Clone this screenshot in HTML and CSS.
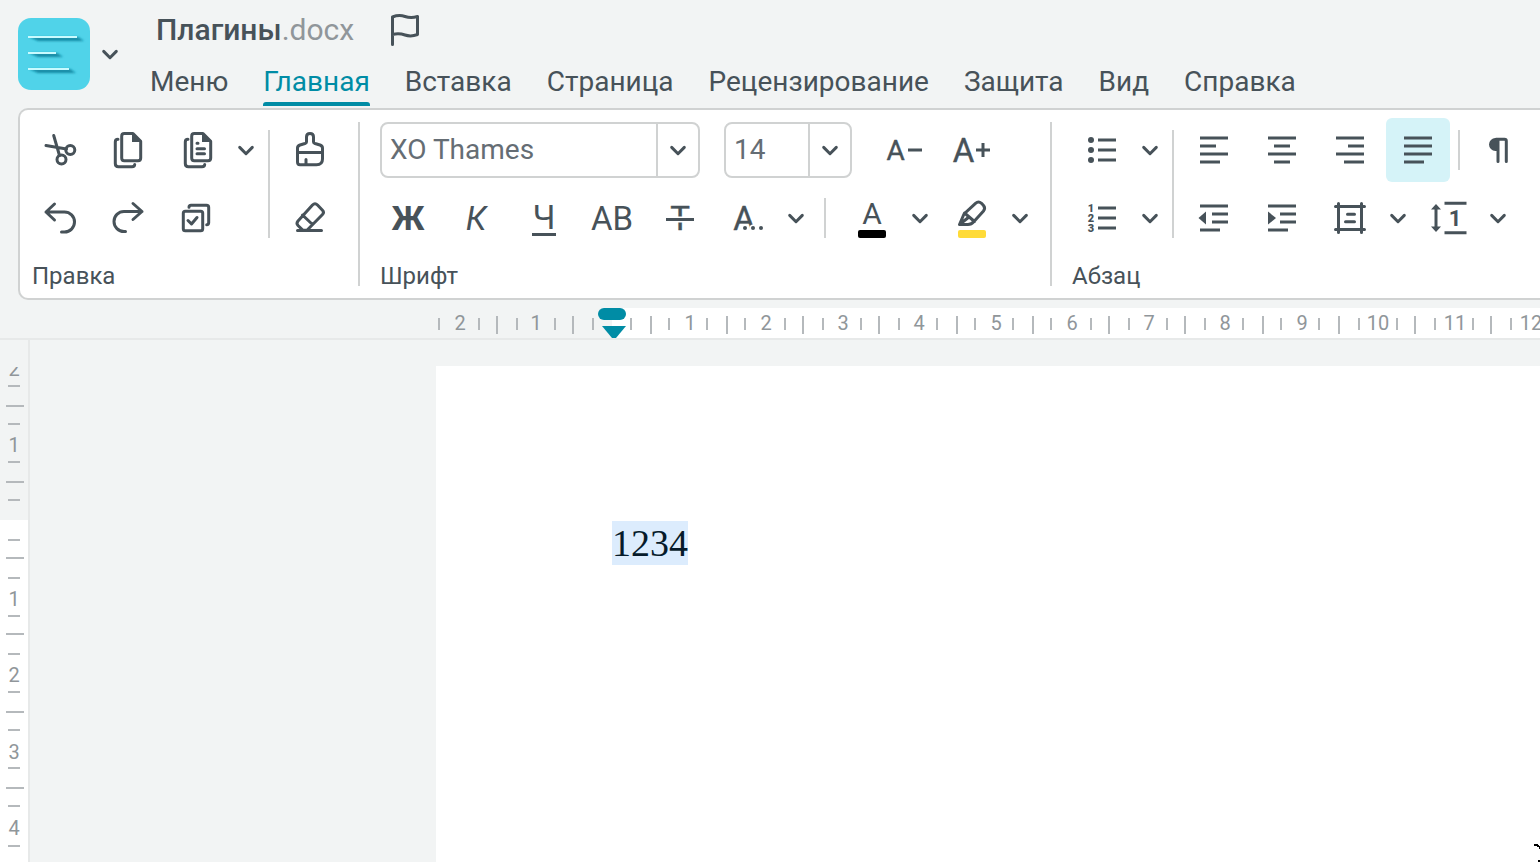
FILE: index.html
```html
<!DOCTYPE html>
<html lang="ru">
<head>
<meta charset="utf-8">
<title>Плагины.docx</title>
<link rel="stylesheet" href="styles.css">
</head>
<body>
<svg class="defs" aria-hidden="true">
  <symbol id="chevron" viewBox="-10 -10 20 20"><path d="M-6.3-2.6 0 3.7 6.3-2.6"/></symbol>
  <symbol id="pages" viewBox="-20 -20 40 40">
    <path d="M-3.7-16.4H5L12.7-8.6V8Q12.7 10.7 10 10.7H-3.7Q-6.3 10.7-6.3 8V-13.7Q-6.3-16.4-3.7-16.4Z"/>
    <path class="solid" d="M4-17V-8H13.5V-9L5.500-17Z"/>
    <path d="M-10-10.7Q-12.7-10.700-12.700-8V13.500Q-12.700 16.700-9.500 16.700H4Q6.700 16.700 6.700 14.500"/>
  </symbol>
</svg>

<header class="header">
  <button class="logo" aria-label="Приложение">
    <svg viewBox="0 0 72 72" width="72" height="72">
      <defs><filter id="soft" x="-20%" y="-60%" width="140%" height="240%"><feGaussianBlur stdDeviation="1.3"/></filter></defs>
      <rect width="72" height="72" rx="13" fill="#50d3e9"/>
      <g fill="#128ba5" filter="url(#soft)"><path d="M11 19H60L66 23H20Z"/><path d="M11 35H39L45 39H20Z"/><path d="M11 51H52L58 55H20Z"/></g>
      <g fill="#c9fbff"><path d="M10 18H59V20H10ZM10 34H38V36H10ZM10 50H51V52H10Z"/></g>
    </svg>
  </button>
  <button class="arrow logo-arrow" aria-label="Выбрать приложение"><svg class="chev"><use href="#chevron"/></svg></button>
  <div class="head-main">
    <div class="title"><h1>Плагины<span>.docx</span></h1>
      <button class="flag" aria-label="Отметить"><svg width="32" height="36" viewBox="0 0 32 36"><path d="M4.500 32.500V5Q11 2.500 17 4.500Q23 6.500 29.500 4.500V22.500Q23 25 17 23Q11 21 4.500 22.500"/></svg></button>
    </div>
    <nav class="tabs">
      <a href="#menu">Меню</a><a href="#home" class="active" aria-current="page">Главная</a><a href="#insert">Вставка</a><a href="#page">Страница</a><a href="#review">Рецензирование</a><a href="#protect">Защита</a><a href="#view">Вид</a><a href="#help">Справка</a>
    </nav>
  </div>
</header>

<section class="toolbar" aria-label="Главная">
  <div class="group">
    <div class="tools">
      <div class="rows">
        <div class="row">
          <button class="tool" aria-label="Вырезать"><svg class="icon" viewBox="-20 -20 40 40"><path d="M-14-4.500 6.500-1M-6.300-14.500-.500 5.500"/><circle cx="10.300" cy="0" r="4.500"/><circle cx="1.500" cy="9.500" r="4.500"/></svg></button>
          <button class="tool" aria-label="Копировать"><svg class="icon"><use href="#pages"/></svg></button>
          <div class="split">
            <button class="tool" aria-label="Вставить"><svg class="icon" viewBox="-22 -20 40 40"><use href="#pages" x="-20" y="-20" width="40" height="40"/><path d="M-1-6.700H0M-1-1.300H6.500M-1 3.700H6.500"/></svg></button>
            <button class="arrow wide" aria-label="Параметры вставки"><svg class="chev"><use href="#chevron"/></svg></button>
          </div>
        </div>
        <div class="row">
          <button class="tool" aria-label="Отменить"><svg class="icon" viewBox="-20 -20 40 40"><path d="M-5.500-14-14-6-5.500 2M-14-6H4.500A10 10 0 0 1 4.500 14H1.500"/></svg></button>
          <button class="tool" aria-label="Повторить"><svg class="icon" viewBox="-20 -20 40 40"><path d="M5-14.500 14-6.500 5 1.500M14-6.500H-4A10 10 0 0 0-4 13.500H-2.500"/></svg></button>
          <button class="tool" aria-label="Выделить всё"><svg class="icon" viewBox="-20 -20 40 40"><rect x="-12.700" y="-6.700" width="19.400" height="19.400" rx="2"/><path d="M-7-10.700Q-7-12.700-5-12.700H10.500Q12.700-12.700 12.700-10.500V4.500Q12.700 6.700 10.700 6.700M-8 2.500-4.500 6 1-.500"/></svg></button>
        </div>
      </div>
      <i class="sep gap-sm"></i>
      <div class="rows">
        <button class="tool" aria-label="Формат по образцу"><svg class="icon" viewBox="-20 -20 40 40"><path d="M-3.500-13Q-3.500-16.500 0-16.500T3.500-13V-8Q3.500-7 5-6.500L10-5Q12.500-4 12.500-2V9Q12.500 14.700 6.500 14.700H-10Q-12.500 14.700-12.500 12V-2Q-12.500-4-10-5L-5-6.500Q-3.500-7-3.500-8ZM-12.500 2.500H12.500M-4 9.500V14"/></svg></button>
        <button class="tool" aria-label="Очистить формат"><svg class="icon" viewBox="-20 -20 40 40"><path d="M2.500-13Q5-15.500 7.500-13L12.500-7.700Q14.500-5.500 12.500-3.500L-3 12.300H-7L-12 7.500Q-14 5.500-12 3ZM-7.500-3 2.500 6.500M-12.500 12.400H11.500"/></svg></button>
      </div>
    </div>
    <h2>Правка</h2>
  </div>
  <i class="divider"></i>
  <div class="group group-font">
    <div class="rows">
      <div class="row">
        <div class="field field-font"><input type="text" value="XO Thames" aria-label="Шрифт"><button aria-label="Список шрифтов"><svg class="chev"><use href="#chevron"/></svg></button></div>
        <div class="field field-size"><input type="text" value="14" aria-label="Размер шрифта"><button aria-label="Список размеров"><svg class="chev"><use href="#chevron"/></svg></button></div>
        <div class="row">
          <button class="tool" aria-label="Уменьшить шрифт"><svg class="icon" viewBox="-20 -20 40 40"><text class="t28 plain firm" x="-8.500" y="10">A</text><path class="flat" d="M4 0H18"/></svg></button>
          <button class="tool" aria-label="Увеличить шрифт"><svg class="icon" viewBox="-20 -20 40 40"><text class="t32 plain firm" x="-8.500" y="12">A</text><path class="flat" d="M4 0H18M11-7V7"/></svg></button>
        </div>
      </div>
      <div class="row nudge">
        <button class="tool" aria-label="Полужирный"><svg class="icon" viewBox="-20 -20 40 40"><text class="t32 heavy" x="0" y="12">Ж</text></svg></button>
        <button class="tool" aria-label="Курсив"><svg class="icon" viewBox="-20 -20 40 40"><text class="t32 italic" x="0" y="12">К</text></svg></button>
        <button class="tool" aria-label="Подчёркнутый"><svg class="icon" viewBox="-20 -20 40 40"><text class="t32 plain" x="0" y="11">Ч</text><path class="flat" d="M-12 16.500H12"/></svg></button>
        <button class="tool" aria-label="Все прописные"><svg class="icon" viewBox="-20 -20 40 40"><text class="t32 plain" x="0" y="12">AB</text></svg></button>
        <button class="tool" aria-label="Зачёркнутый"><svg class="icon" viewBox="-20 -20 40 40"><text class="t32 plain firm" x="0" y="12">T</text><path class="halo" d="M-12 1.500H12"/><path class="flat" d="M-14 1.500H14"/></svg></button>
        <div class="split">
          <button class="tool" aria-label="Другие эффекты"><svg class="icon" viewBox="-20 -20 40 40"><text class="t32 plain firm" x="-4" y="12">A</text><g class="halo-dots"><circle cx="-3" cy="10" r="2"/><circle cx="5" cy="10" r="2"/><circle cx="13" cy="10" r="2"/></g></svg></button>
          <button class="arrow" aria-label="Список эффектов"><svg class="chev"><use href="#chevron"/></svg></button>
        </div>
        <i class="sep short gap-font"></i>
        <div class="split">
          <button class="tool" aria-label="Цвет текста"><svg class="icon" viewBox="-20 -20 40 40"><text class="t30 plain" x="0" y="6">A</text><rect class="black" x="-14" y="12" width="28" height="8" rx="2"/></svg></button>
          <button class="arrow" aria-label="Выбор цвета текста"><svg class="chev"><use href="#chevron"/></svg></button>
        </div>
        <div class="split">
          <button class="tool" aria-label="Цвет выделения"><svg class="icon" viewBox="-20 -20 40 40"><path d="M-12.500 6.500-8-4 3.500-14.700Q6.500-17.300 9.500-14.700L11.500-12.500Q13.700-9.700 11.500-7L2 3.500Q-.500 6.500-4 6.500ZM-7.500-5 2.500 3.500M-12.500 6.500-3-1"/><rect class="yellow" x="-14" y="12" width="28" height="8" rx="2"/></svg></button>
          <button class="arrow" aria-label="Выбор цвета выделения"><svg class="chev"><use href="#chevron"/></svg></button>
        </div>
      </div>
    </div>
    <h2>Шрифт</h2>
  </div>
  <i class="divider"></i>
  <div class="group group-para">
    <div class="tools">
      <div class="rows">
        <div class="split">
          <button class="tool" aria-label="Маркированный список"><svg class="icon" viewBox="-20 -20 40 40"><g class="dots"><circle cx="-11" cy="-10" r="3"/><circle cx="-11" cy="0" r="3"/><circle cx="-11" cy="10" r="3"/></g><path class="flat" d="M-4-10H14M-4 0H14M-4 10H14"/></svg></button>
          <button class="arrow" aria-label="Стили маркеров"><svg class="chev"><use href="#chevron"/></svg></button>
        </div>
        <div class="split">
          <button class="tool" aria-label="Нумерованный список"><svg class="icon" viewBox="-20 -20 40 40"><text class="t11" x="-11" y="-6">1</text><text class="t11" x="-11" y="4">2</text><text class="t11" x="-11" y="14">3</text><path class="flat" d="M-4-10H14M-4 0H14M-4 10H14"/></svg></button>
          <button class="arrow" aria-label="Стили нумерации"><svg class="chev"><use href="#chevron"/></svg></button>
        </div>
      </div>
      <i class="sep gap-para"></i>
      <div class="rows">
        <div class="row">
          <button class="tool" aria-label="По левому краю"><svg class="icon" viewBox="-20 -20 40 40"><path class="flat" d="M-14-12H14M-14-4H2M-14 4H14M-14 12H6"/></svg></button>
          <button class="tool" aria-label="По центру"><svg class="icon" viewBox="-20 -20 40 40"><path class="flat" d="M-14-12H14M-8-4H8M-14 4H14M-8 12H8"/></svg></button>
          <button class="tool" aria-label="По правому краю"><svg class="icon" viewBox="-20 -20 40 40"><path class="flat" d="M-14-12H14M-2-4H14M-14 4H14M-6 12H14"/></svg></button>
          <button class="tool pressed" aria-pressed="true" aria-label="По ширине"><svg class="icon" viewBox="-20 -20 40 40"><path class="flat" d="M-14-12H14M-14-4H14M-14 4H14M-14 12H6"/></svg></button>
          <i class="sep short gap-mark"></i>
          <button class="tool narrow" aria-label="Непечатаемые символы"><svg class="icon" viewBox="-20 -20 40 40"><path class="solid" d="M0-12H-2.500A6.500 6.500 0 0 0-2.500 1H0Z"/><path d="M-2-10.700H6.500Q8.300-10.700 8.300-9V11.500M0-10V11.500"/></svg></button>
        </div>
        <div class="row">
          <button class="tool" aria-label="Уменьшить отступ"><svg class="icon" viewBox="-20 -20 40 40"><path class="flat" d="M-14-12H14M-2-4H14M-2 4H14M-14 12H6"/><path class="fill" d="M-15.500 0-8-6.500V6.500Z"/></svg></button>
          <button class="tool" aria-label="Увеличить отступ"><svg class="icon" viewBox="-20 -20 40 40"><path class="flat" d="M-14-12H14M-2-4H14M-2 4H14M-14 12H6"/><path class="fill" d="M-6 0-14-6.500V6.500Z"/></svg></button>
          <div class="split">
            <button class="tool" aria-label="Границы абзаца"><svg class="icon" viewBox="-20 -20 40 40"><path d="M-11.500-14.500V14.500M11.500-14.500V14.500M-14.500-11.500H14.500M-14.500 11.500H14.500M-2.500-3.700H4.500M-4.500 3.700H4.500"/></svg></button>
            <button class="arrow" aria-label="Параметры границ"><svg class="chev"><use href="#chevron"/></svg></button>
          </div>
          <div class="split">
            <button class="tool" aria-label="Межстрочный интервал"><svg class="icon" viewBox="-20 -20 40 40"><path class="flat" d="M-5.500-14.700H16.500M-5.500 14.700H16.500M-14-10V10"/><path class="fill" d="M-14-14-9-8.500H-19ZM-14 14-9 8.500H-19Z"/><text class="t22" x="5" y="8">1</text></svg></button>
            <button class="arrow" aria-label="Параметры интервала"><svg class="chev"><use href="#chevron"/></svg></button>
          </div>
        </div>
      </div>
    </div>
    <h2>Абзац</h2>
  </div>
</section>

<svg class="ruler-top" id="ruler-top" role="img" aria-label="Горизонтальная линейка">
  <rect class="ruler-area" x="612" y="0" width="100%" height="30"/>
  <g class="marks"></g>
  <g class="marker"><rect x="598" y="0" width="28" height="12" rx="6"/><path d="M602 18H626L616 30H612Z"/></g>
</svg>

<main class="workspace">
  <svg class="ruler-side" id="ruler-side" role="img" aria-label="Вертикальная линейка">
    <rect class="ruler-area" x="0" y="180" width="28" height="100%"/>
    <g class="marks"></g>
    <rect class="ruler-cap" x="0" y="0" width="28" height="27"/>
  </svg>
  <div class="canvas">
    <article class="sheet"><p><span>1234</span></p></article>
  </div>
</main>
<svg class="pointer" width="6" height="18" viewBox="0 0 6 18" aria-hidden="true"><path d="M0 0H4V1H5V2H6V5H5V3H3V2H0ZM4 16H6V18H4Z"/></svg>
<script src="rulers.js"></script>
</body>
</html>
```
FILE: rulers.js
```js
const NS = "http://www.w3.org/2000/svg";
const QUARTER = 19.13;

function drawRuler(id, origin, first, length, makeTick, placeLabel) {
  const marks = document.querySelector("#" + id + " .marks");
  marks.replaceChildren();
  let ticks = "";
  for (let n = first; origin + n * QUARTER < length; n++) {
    const at = origin + n * QUARTER;
    if (n % 4 !== 0) {
      ticks += makeTick(2 * Math.round(at / 2), n % 2 === 0);
    } else if (n !== 0) {
      const label = document.createElementNS(NS, "text");
      const [x, y] = placeLabel(Math.round(at));
      label.setAttribute("x", x);
      label.setAttribute("y", y);
      label.textContent = Math.abs(n / 4);
      marks.append(label);
    }
  }
  const path = document.createElementNS(NS, "path");
  path.setAttribute("d", ticks);
  marks.append(path);
}

function drawRulers() {
  const top = document.getElementById("ruler-top").getBoundingClientRect();
  const side = document.getElementById("ruler-side").getBoundingClientRect();
  drawRuler("ruler-top", 611, -9, top.width,
    (x, half) => half ? `M${x} 8h2v18h-2Z` : `M${x} 10h2v12h-2Z`,
    at => [at + 2, 22]);
  drawRuler("ruler-side", 180, -8, side.height,
    (y, half) => half ? `M6 ${y - 1}h18v2h-18Z` : `M8 ${y - 1}h12v2h-12Z`,
    at => [14, at + 9]);
}

drawRulers();
window.addEventListener("resize", drawRulers);
```
FILE: styles.css
```css
:root {
  --ink: #475259;
  --accent: #008ca5;
  --line: #d0d2d2;
  --back: #f2f4f4;
}

* { box-sizing: border-box; }

body {
  margin: 0;
  height: 100vh;
  display: flex;
  flex-direction: column;
  overflow: hidden;
  background: var(--back);
  color: var(--ink);
  font-family: Roboto, "Noto Sans", sans-serif;
}

button {
  padding: 0;
  border: 0;
  background: none;
  color: inherit;
  font: inherit;
  display: flex;
  align-items: center;
  justify-content: center;
  flex-shrink: 0;
}

svg { display: block; flex-shrink: 0; }
.defs { position: absolute; width: 0; height: 0; }

.header { display: flex; padding: 8px 0 2px 18px; }
.logo { align-self: flex-start; margin-top: 10px; }
.arrow { width: 32px; height: 64px; }
.arrow.wide { width: 36px; }
.logo-arrow { width: 40px; margin-top: 14px; }
.head-main { padding-left: 20px; }
.title { display: flex; align-items: center; gap: 34px; padding-left: 6px; height: 44px; }
.title h1 { margin: 0; font-size: 30px; line-height: 44px; font-weight: 500; }
.title h1 span { color: #90969a; font-weight: 400; }
.tabs { display: flex; gap: 35px; margin-top: 6px; }
.tabs a {
  color: inherit;
  text-decoration: none;
  white-space: nowrap;
  font-size: 28px;
  line-height: 48px;
  position: relative;
}
.tabs .active { color: var(--accent); }
.tabs .active::after {
  content: "";
  position: absolute;
  left: 0;
  right: 0;
  bottom: 0;
  height: 4px;
  border-radius: 3px 3px 0 0;
  background: var(--accent);
}

.chev { width: 20px; height: 20px; }
.icon { width: 40px; height: 40px; overflow: visible; }
.chev, .icon, .flag svg {
  fill: none;
  stroke: var(--ink);
  stroke-width: 3px;
  stroke-linecap: round;
  stroke-linejoin: round;
}
.icon .flat { stroke-linecap: butt; }
.icon .halo { stroke: #fff; stroke-width: 6px; }
.icon .fill, .icon .dots { fill: var(--ink); stroke: none; }
.icon .halo-dots { fill: var(--ink); stroke: #fff; stroke-width: 3px; paint-order: stroke; }
.solid { fill: var(--ink); stroke: none; }
.icon .black { fill: #000; stroke: none; }
.icon .yellow { fill: #ffdb38; stroke: none; }
.icon text { fill: var(--ink); stroke: none; text-anchor: middle; font-weight: 500; }
.icon .plain { font-weight: 400; }
.icon .firm { stroke: var(--ink); stroke-width: 0.4px; }
.icon .heavy { font-weight: 700; }
.icon .italic { font-weight: 400; font-style: italic; }
.icon .t11 { font-size: 11px; font-weight: 900; }
.icon .t22 { font-size: 22px; font-weight: 700; }
.icon .t28 { font-size: 28px; }
.icon .t30 { font-size: 30px; }
.icon .t32 { font-size: 33px; }

.toolbar {
  display: flex;
  margin-left: 18px;
  padding: 8px 0 8px 8px;
  border: 2px solid var(--line);
  border-right: 0;
  border-radius: 10px 0 0 10px;
  background: #fff;
  overflow: hidden;
}
.group { flex-shrink: 0; padding-right: 16px; }
.group h2 { margin: 12px 0 0 4px; font-size: 24px; line-height: 28px; font-weight: 400; }
.group-font { padding: 0 14px 0 20px; }
.group-font h2 { margin-left: 0; }
.group-para { padding-left: 18px; }
.group-para h2 { margin-left: 2px; }
.tools, .row, .split { display: flex; align-items: center; }
.rows { display: flex; flex-direction: column; gap: 4px; }
.row { gap: 4px; }
.nudge { margin-left: -4px; }
.tool { width: 64px; height: 64px; border-radius: 6px; }
.tool.narrow { width: 60px; }
.tool.pressed { background: #d5f3f8; }
.sep { width: 2px; height: 108px; background: var(--line); flex-shrink: 0; }
.sep.short { height: 40px; }
.gap-sm { margin: 0 8px 0 4px; }
.gap-font { margin: 0 10px 0 8px; }
.gap-para { margin: 0 8px 0 6px; }
.gap-mark { margin: 0 4px; }
.divider { width: 2px; margin: 4px 0; background: var(--line); flex-shrink: 0; }

.field {
  display: flex;
  height: 56px;
  border: 2px solid var(--line);
  border-radius: 8px;
}
.field-font { width: 320px; margin-right: 20px; }
.field-size { width: 128px; margin-right: 16px; }
.field input {
  flex: 1;
  min-width: 0;
  border: 0;
  padding: 0 8px 2px;
  background: none;
  color: #656d74;
  font: 28px Roboto, "Noto Sans", sans-serif;
  outline: 0;
}
.field button { width: 42px; border-left: 2px solid var(--line); }

.ruler-top {
  width: 100%;
  height: 32px;
  margin-top: 8px;
  border-bottom: 2px solid #e7e9e9;
}
.ruler-area { fill: #fff; }
.ruler-cap { fill: var(--back); }
.marks { fill: #b5b9bc; }
.marks text { fill: #90969a; font-size: 20px; text-anchor: middle; }
.marker { fill: var(--accent); }

.workspace { display: flex; flex: 1; min-height: 0; }
.ruler-side { width: 30px; height: 100%; border-right: 2px solid #e7e9e9; }
.canvas { flex: 1; display: flex; padding: 26px 0 0 406px; min-width: 0; }
.sheet { flex: 1; background: #fff; padding: 155px 0 0 176px; }
.sheet p {
  margin: 0;
  color: #061b2b;
  font: 38px/44px "Liberation Serif", serif;
}
.sheet span { display: inline-block; background: #dcecfd; }
.pointer { position: fixed; right: 0; bottom: 0; fill: #000; }
```
